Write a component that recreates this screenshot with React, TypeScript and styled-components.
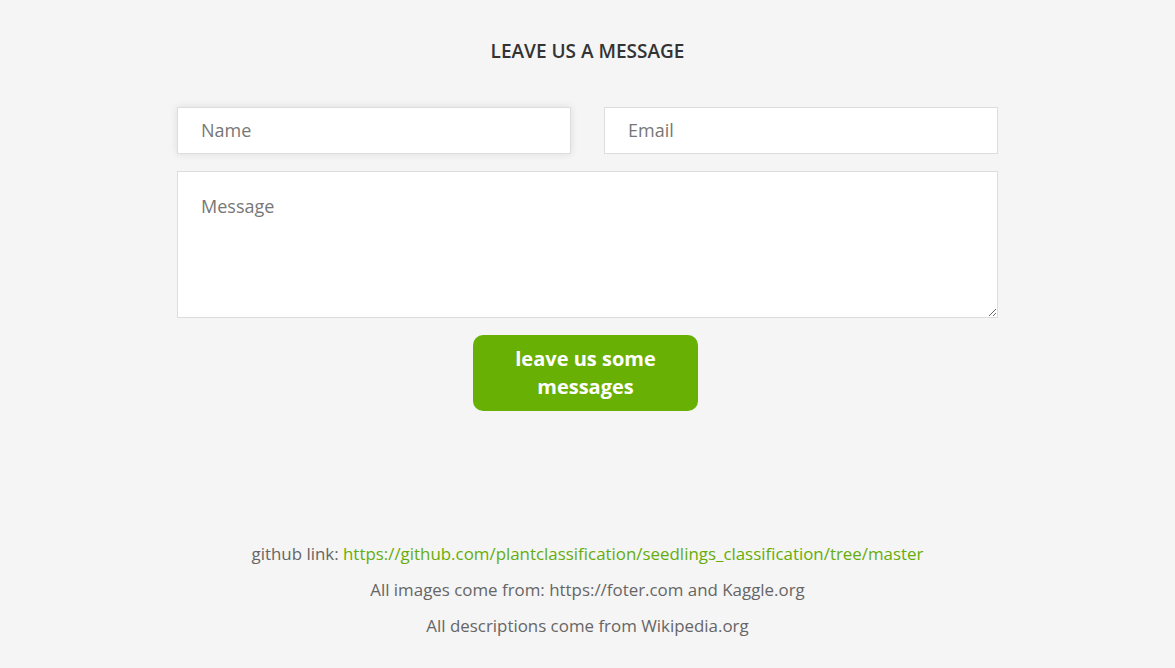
import React from "react";
import styled, { createGlobalStyle } from "styled-components";

const Global = createGlobalStyle`
  html, body { margin: 0; padding: 0; background: #f5f5f5; }
  body { font-family: "Open Sans", "Noto Sans", sans-serif; }
  * { box-sizing: border-box; }
`;

const Page = styled.div`
  min-height: 668px;
  background: #f5f5f5;
  display: flex;
  flex-direction: column;
  align-items: center;
  padding-top: 38px;
`;

const Title = styled.h2`
  margin: 0;
  font-size: 19px;
  line-height: 26px;
  font-weight: 600;
  color: #333;
  text-transform: uppercase;
`;

const Form = styled.form`
  width: 821px;
  margin-top: 43px;
  display: flex;
  flex-direction: column;
  gap: 17px;
  align-items: center;
`;

const Row = styled.div`
  width: 100%;
  display: grid;
  grid-template-columns: 1fr 1fr;
  gap: 33px;
`;

const fieldBase = `
  width: 100%;
  background: #fff;
  border: 1px solid #ddd;
  font-family: "Open Sans", "Noto Sans", sans-serif;
  font-size: 18px;
  color: #555;
  padding: 0 23px;
  outline: none;
  &::placeholder { color: #777; }
`;

const Input = styled.input<{ $focused?: boolean }>`
  ${fieldBase}
  height: 47px;
  padding-bottom: 2px;
  box-shadow: ${(p) => (p.$focused ? "0 0 8px rgba(0,0,0,0.10)" : "none")};
`;

const TextArea = styled.textarea`
  ${fieldBase}
  height: 147px;
  padding-top: 22px;
  resize: vertical;
  display: block;
`;

const Button = styled.button`
  width: 225px;
  height: 76px;
  margin-right: 4px;
  background: #69b004;
  color: #fff;
  border: none;
  border-radius: 10px;
  font-family: "Open Sans", "Noto Sans", sans-serif;
  font-weight: 700;
  font-size: 20px;
  line-height: 28px;
  padding: 0 24px;
  cursor: pointer;
`;

const Footer = styled.footer`
  margin-top: 131px;
  display: flex;
  flex-direction: column;
  align-items: center;
  gap: 13px;
`;

const Line = styled.p`
  margin: 0;
  font-size: 16.9px;
  line-height: 23px;
  color: #666;
`;

const Link = styled.a`
  color: #66ad0a;
  text-decoration: none;
`;

export default function App() {
  return (
    <>
      <Global />
      <Page>
        <Title>Leave us a message</Title>
        <Form onSubmit={(e) => e.preventDefault()}>
          <Row>
            <Input placeholder="Name" $focused />
            <Input placeholder="Email" />
          </Row>
          <TextArea placeholder="Message" />
          <Button type="submit">leave us some messages</Button>
        </Form>
        <Footer>
          <Line>
            github link:{" "}
            <Link href="#">https://github.com/plantclassification/seedlings_classification/tree/master</Link>
          </Line>
          <Line>All images come from: https://foter.com and Kaggle.org</Line>
          <Line>All descriptions come from Wikipedia.org</Line>
        </Footer>
      </Page>
    </>
  );
}
